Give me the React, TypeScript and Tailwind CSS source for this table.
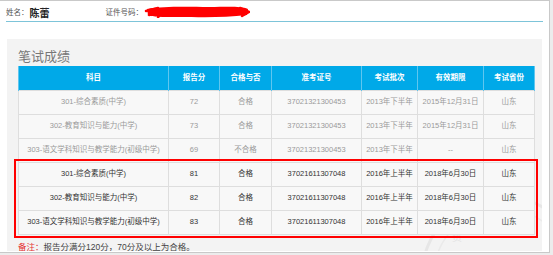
const rows = [
  { subject: "301-综合素质(中学)", score: "72", pass: "合格", ticket: "37021321300453", batch: "2013年下半年", valid: "2015年12月31日", prov: "山东", old: true },
  { subject: "302-教育知识与能力(中学)", score: "73", pass: "合格", ticket: "37021321300453", batch: "2013年下半年", valid: "2015年12月31日", prov: "山东", old: true },
  { subject: "303-语文学科知识与教学能力(初级中学)", score: "69", pass: "不合格", ticket: "37021321300453", batch: "2013年下半年", valid: "--", prov: "山东", old: true },
  { subject: "301-综合素质(中学)", score: "81", pass: "合格", ticket: "37021611307048", batch: "2016年上半年", valid: "2018年6月30日", prov: "山东", old: false },
  { subject: "302-教育知识与能力(中学)", score: "82", pass: "合格", ticket: "37021611307048", batch: "2016年上半年", valid: "2018年6月30日", prov: "山东", old: false },
  { subject: "303-语文学科知识与教学能力(初级中学)", score: "83", pass: "合格", ticket: "37021611307048", batch: "2016年上半年", valid: "2018年6月30日", prov: "山东", old: false },
];

const heads = ["科目", "报告分", "合格与否", "准考证号", "考试批次", "有效期限", "考试省份"];
const widths = ["w-[150px]", "w-[51px]", "w-[52px]", "w-[90px]", "w-[56px]", "w-[66px]", "w-[51px]"];

export default function App() {
  return (
    <div
      className="relative w-[553px] h-[255px] bg-[#ececec] overflow-hidden"
      style={{ fontFamily: '"Liberation Sans", "Noto Sans CJK SC", sans-serif' }}
    >
      <div className="relative w-[550px] h-[253px] bg-white border-t border-r border-b border-[#c9c9c9] px-[7px] overflow-hidden">
        {/* header */}
        <div className="flex items-center h-[21px] pt-[4px] border-b border-[#7dc4d9] -mx-[1px]">
          <span className="text-[7.5px] text-[#555]">姓名：</span>
          <span className="text-[10px] font-bold text-[#222] ml-[1px]">陈蕾</span>
          <span className="text-[7.5px] text-[#555] ml-[56px]">证件号码：</span>
          <svg width="106" height="12" viewBox="0 0 106 12" className="ml-[1px] -mt-[3px]">
            <path
              d="M3 3 C20 0 45 1 65 1 S96 0 104 3 L103 9 C80 12 55 11 35 11 S10 11 4 9 Z"
              fill="#ff0000"
            />
            <path
              d="M2 5 L14 2 L5 9 L22 4 L14 11 M96 2 L105 6 L98 10"
              stroke="#ff0000"
              strokeWidth="2.5"
              fill="none"
              strokeLinecap="round"
              strokeLinejoin="round"
            />
          </svg>
        </div>

        {/* panel */}
        <div className="relative mt-[17px] bg-[#f3f3f3] h-[212px] px-[11px] pt-[9px] overflow-hidden">
          <svg className="absolute right-[-20px] bottom-[-50px]" width="150" height="120" viewBox="0 0 150 120">
            <circle cx="90" cy="95" r="80" stroke="#e6e6e6" strokeWidth="3" fill="none" />
            <circle cx="90" cy="95" r="68" stroke="#eaeaea" strokeWidth="1.5" fill="none" />
            <text x="40" y="60" fontSize="10" fill="#e3e3e3">资</text>
            <text x="80" y="42" fontSize="10" fill="#e3e3e3">格</text>
          </svg>

          <div className="relative h-[18px] leading-[18px] text-[13px] text-[#777]">笔试成绩</div>

          <table className="relative border-collapse table-fixed w-[516px] text-[7.5px]">
            <thead>
              <tr className="h-[24px] bg-[#00a9e8] text-white font-bold">
                {heads.map((h, i) => (
                  <th key={h} className={`${widths[i]} border-x border-[#5fc6ef] font-bold text-center`}>
                    {h}
                  </th>
                ))}
              </tr>
            </thead>
            <tbody>
              {rows.map((r, i) => (
                <tr key={i} className={`h-[24px] bg-[#f8f8f8] ${r.old ? "text-[#9a9a9a]" : "text-[#333]"}`}>
                  {[r.subject, r.score, r.pass, r.ticket, r.batch, r.valid, r.prov].map((c, j) => (
                    <td key={j} className="border border-[#dedede] text-center whitespace-nowrap overflow-hidden">
                      {c}
                    </td>
                  ))}
                </tr>
              ))}
            </tbody>
          </table>

          {/* highlight box */}
          <div className="absolute left-[7px] top-[120px] w-[524px] h-[79px] border-[2.5px] border-[#ff0000]" />

          <div className="relative mt-[6px] text-[8.5px] text-[#444]">
            <span className="text-[#e53333]">备注：</span>报告分满分120分，70分及以上为合格。
          </div>
        </div>
      </div>
    </div>
  );
}
